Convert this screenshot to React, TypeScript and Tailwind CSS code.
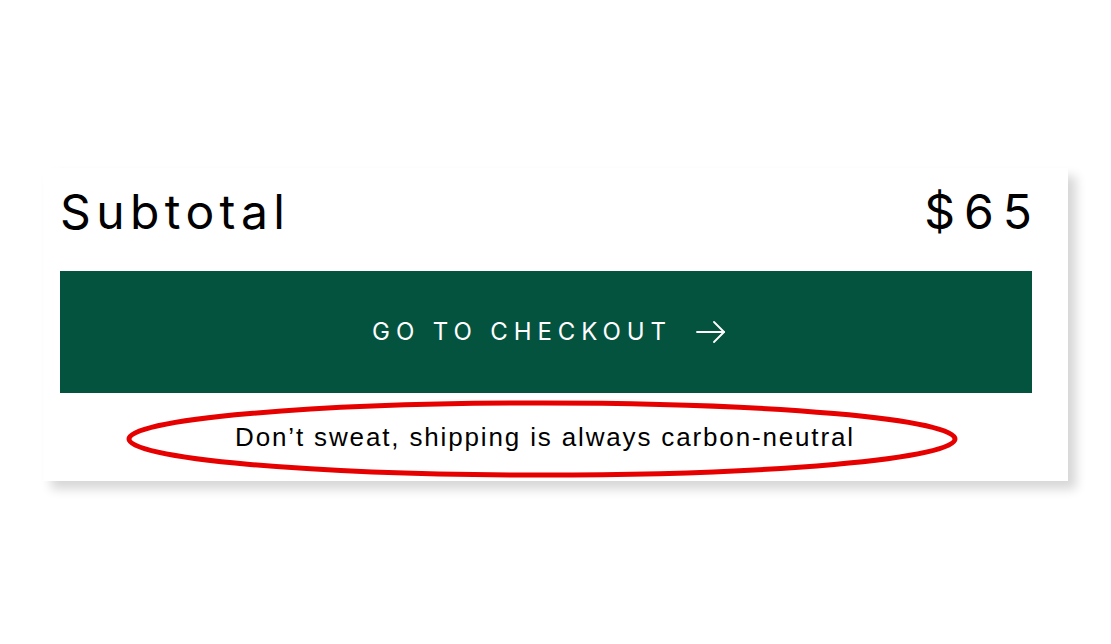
import React from 'react';

const App = () => {
  return (
    <div className="w-[1111px] h-[644px] bg-white overflow-hidden" style={{ fontFamily: 'Inter, "Liberation Sans", sans-serif' }}>
      <div className="relative ml-[43px] mt-[168px] w-[1025px] h-[313px] bg-white pl-[17px] pr-[36px] shadow-[8px_8px_10px_rgba(0,0,0,0.16)]">
        <div className="flex items-center justify-between h-[103px] pb-[16px] text-black">
          <span className="text-[48px] font-normal tracking-[5.4px] leading-none">Subtotal</span>
          <span className="text-[48px] font-normal tracking-[9px] leading-none -mr-[9px]">$65</span>
        </div>
        <button
          type="button"
          className="w-full h-[122px] bg-[#04533f] text-white flex items-center justify-center gap-[24px]"
        >
          <span className="text-[24px] tracking-[5.9px] font-normal pl-[6px]">GO TO CHECKOUT</span>
          <svg width="30" height="22" viewBox="0 0 30 22" fill="none" stroke="white" strokeWidth="1.8" strokeLinecap="round" strokeLinejoin="round">
            <path d="M1 11h27" />
            <path d="M18 1l10 10-10 10" />
          </svg>
        </button>
        <div className="flex items-center justify-center h-[90px] pb-[2px] pr-[2px]">
          <span className="text-[26px] tracking-[1.85px] text-black" style={{ fontFamily: '"Liberation Sans", Arial, sans-serif' }}>
            Don’t sweat, shipping is always carbon-neutral
          </span>
        </div>
        <svg
          className="absolute left-[83px] top-[231px] pointer-events-none"
          width="832"
          height="80"
          viewBox="0 0 832 80"
          fill="none"
        >
          <ellipse cx="416" cy="40" rx="413" ry="36" stroke="#e60000" strokeWidth="5" />
        </svg>
      </div>
    </div>
  );
};

export default App;
